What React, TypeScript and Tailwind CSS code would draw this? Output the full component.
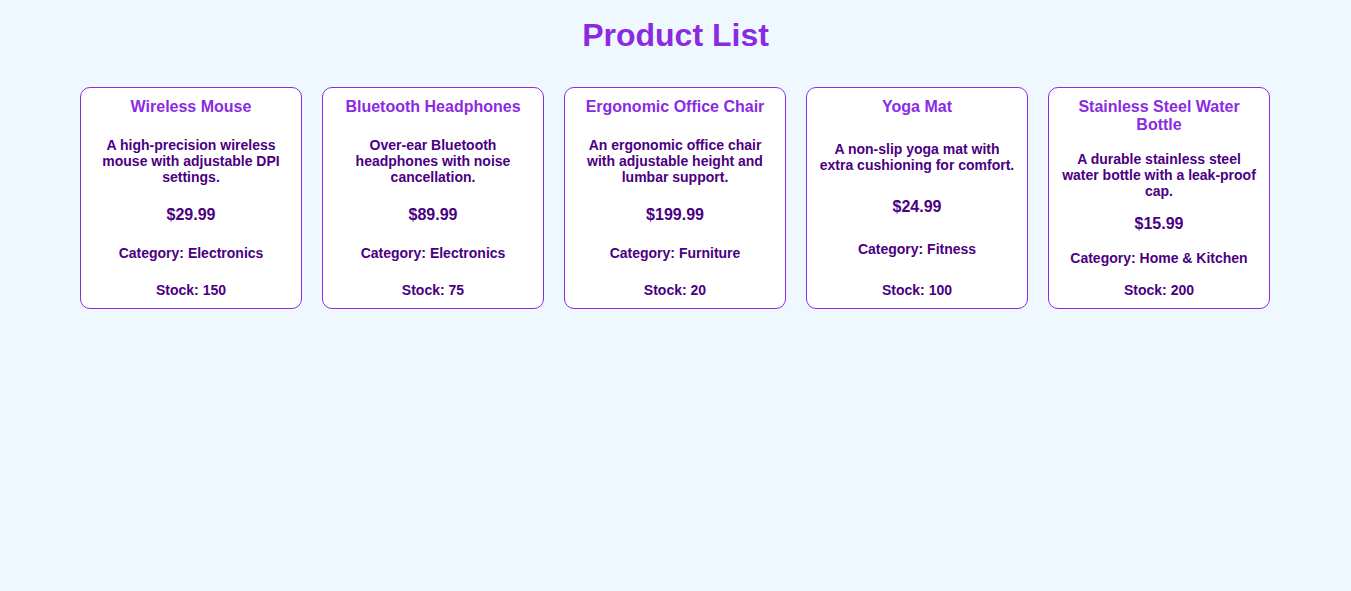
const products = [
  {
    name: "Wireless Mouse",
    description: "A high-precision wireless mouse with adjustable DPI settings.",
    price: 29.99,
    category: "Electronics",
    stock: 150,
  },
  {
    name: "Bluetooth Headphones",
    description: "Over-ear Bluetooth headphones with noise cancellation.",
    price: 89.99,
    category: "Electronics",
    stock: 75,
  },
  {
    name: "Ergonomic Office Chair",
    description: "An ergonomic office chair with adjustable height and lumbar support.",
    price: 199.99,
    category: "Furniture",
    stock: 20,
  },
  {
    name: "Yoga Mat",
    description: "A non-slip yoga mat with extra cushioning for comfort.",
    price: 24.99,
    category: "Fitness",
    stock: 100,
  },
  {
    name: "Stainless Steel Water Bottle",
    description: "A durable stainless steel water bottle with a leak-proof cap.",
    price: 15.99,
    category: "Home & Kitchen",
    stock: 200,
  },
];

function ProductCard({ p }: { p: (typeof products)[number] }) {
  return (
    <div className="box-content w-[200px] h-[200px] p-[10px] flex flex-col justify-between items-center text-center bg-white border border-[#8a2be2] rounded-[10px] leading-[normal] font-bold">
      <h3 className="text-[16px] text-[#8a2be2]">{p.name}</h3>
      <p className="text-[14px] text-[#4b0082]">{p.description}</p>
      <p className="text-[16px] text-[#4b0082]">${p.price.toFixed(2)}</p>
      <p className="text-[14px] text-[#4b0082]">Category: {p.category}</p>
      <p className="text-[14px] text-[#4b0082]">Stock: {p.stock}</p>
    </div>
  );
}

export default function App() {
  return (
    <div className="min-h-screen bg-[#f0f8ff] pt-[17px] font-['Liberation_Sans',Arial,sans-serif]">
      <h1 className="text-center text-[32px] font-bold leading-[normal] text-[#8a2be2] mb-[33px]">
        Product List
      </h1>
      {/* Cards row */}
      <div className="flex justify-center gap-5 pr-px">
        {products.map(p => (
          <ProductCard key={p.name} p={p} />
        ))}
      </div>
    </div>
  );
}
